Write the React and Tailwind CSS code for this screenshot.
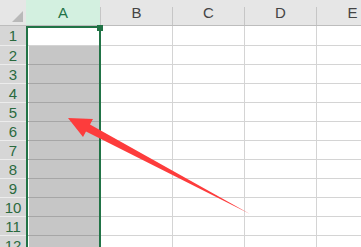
import React from 'react'

const cols = ['B', 'C', 'D']
const rows = [1, 2, 3, 4, 5, 6, 7, 8, 9, 10, 11, 12]

const HeadSep = () => <div className="self-end shrink-0 h-[18px] w-px bg-[#c6c6c6]" />

const App = () => {
  return (
    <div className="relative w-[361px] h-[247px] overflow-hidden bg-white" style={{ fontFamily: '"Liberation Sans", Arial, sans-serif' }}>
      {/* column header */}
      <div className="flex h-[26px] bg-[#e6e6e6] border-b border-[#bdbdbd] text-[15px]">
        <div className="w-[26px] shrink-0 flex items-end justify-end pr-[3px] pb-[3px]">
          <svg width="11" height="11" viewBox="0 0 11 11">
            <polygon points="11,0 11,11 0,11" fill="#b9b9b9" />
          </svg>
        </div>
        <div className="w-[74px] shrink-0 flex bg-[#d3f0e0]">
          <div className="flex-1 flex items-center justify-center text-[#217346] pt-[2px]">A</div>
        </div>
        {cols.map((c) => (
          <div key={c} className="w-[72px] shrink-0 flex">
            <HeadSep />
            <div className="flex-1 flex items-center justify-center text-[#444] pt-[2px]">{c}</div>
          </div>
        ))}
        <div className="w-[72px] shrink-0 flex">
          <HeadSep />
          <div className="flex-1 flex items-center justify-center text-[#444] pt-[2px]">E</div>
        </div>
      </div>

      {/* body rows */}
      {rows.map((r) => {
        const sel = r >= 2
        return (
          <div key={r} className={`flex text-[15px] ${r === 1 ? 'h-[20px]' : 'h-[19px]'}`}>
            <div className="w-[26px] shrink-0 flex items-center justify-center bg-[#d6d6d6] border-b border-[#ececec] text-[#2a6a3e] leading-none">
              {r}
            </div>
            <div className={`w-[74px] shrink-0 border-l-[3px] border-l-white border-b ${sel ? 'bg-[#c6c6c6] border-b-[#a6a6a6]' : 'bg-white border-b-[#d4d4d4]'}`} />
            {cols.map((c) => (
              <div key={c} className="w-[72px] shrink-0 border-l border-b border-[#d4d4d4]" />
            ))}
            <div className="w-[72px] shrink-0 border-l border-b border-[#d4d4d4]" />
          </div>
        )
      })}

      {/* selection outline */}
      <div className="absolute left-[26px] top-[26px] w-[75px] h-[230px] border-2 border-[#217346]" />
      <div className="absolute left-[97px] top-[25px] w-[6px] h-[6px] bg-[#217346]" />

      {/* arrow */}
      <svg className="absolute left-0 top-0" width="361" height="247" viewBox="0 0 361 247">
        <polygon
          points="68,118 93,119 90,124.5 250,214 86,131.5 83,137"
          fill="#fd3c3c"
        />
      </svg>
    </div>
  )
}

export default App
